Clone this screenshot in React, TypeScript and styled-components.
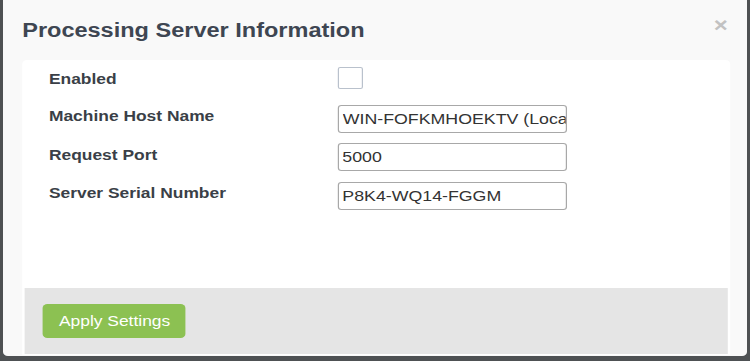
import { FC } from 'react'
import styled, { createGlobalStyle } from 'styled-components'

// the reference is a screenshot that was stretched sideways, so the dialog is laid
// out at its natural width and widened once at the root
const STRETCH = 1.2

const GlobalStyle = createGlobalStyle`
  html, body {
    margin: 0;
    padding: 0;
    height: 100%;
    overflow: hidden;
    background: #4e5153;
  }
  * {
    box-sizing: border-box;
  }
`

const fields = [
  { label: 'Machine Host Name', value: 'WIN-FOFKMHOEKTV (Local)' },
  { label: 'Request Port', value: '5000' },
  { label: 'Server Serial Number', value: 'P8K4-WQ14-FGGM' }
]

const App: FC = () => {
  return (
    <>
      <GlobalStyle />
      <Backdrop>
        <Stage>
          <Modal>
            <Header>
              <Title>Processing Server Information</Title>
              <CloseButton aria-label="Close">×</CloseButton>
            </Header>
            <Panel>
              <Form>
                <Row $height={27}>
                  <Label>Enabled</Label>
                  <Checkbox type="checkbox" />
                </Row>
                {fields.map((f) => (
                  <Row key={f.label} $height={28}>
                    <Label>{f.label}</Label>
                    <TextInput type="text" defaultValue={f.value} />
                  </Row>
                ))}
              </Form>
              <Footer>
                <ApplyButton>Apply Settings</ApplyButton>
              </Footer>
            </Panel>
          </Modal>
        </Stage>
      </Backdrop>
    </>
  )
}

const Backdrop = styled.div`
  height: 100vh;
  padding-left: 3px;
`

const Stage = styled.div`
  width: 620px;
  transform: scaleX(${STRETCH});
  transform-origin: 0 0;
`

const Modal = styled.div`
  display: flex;
  flex-direction: column;
  height: 356px;
  background: #f9f9f9;
  border-radius: 0 0 4px 4px;
  font-family: 'Liberation Sans', Arial, sans-serif;
`

const Header = styled.div`
  display: flex;
  align-items: center;
  justify-content: space-between;
  height: 60px;
  padding: 0 16px 0 16px;
`

const Title = styled.h4`
  margin: 0;
  font-size: 19.6px;
  font-weight: 700;
  line-height: 24px;
  color: #3e4652;
`

const CloseButton = styled.button`
  align-self: flex-start;
  margin-top: 15px;
  padding: 0;
  border: 0;
  background: none;
  font-family: 'Liberation Sans', Arial, sans-serif;
  font-size: 20px;
  font-weight: 700;
  line-height: 20px;
  color: #c2c2c2;
  cursor: pointer;
`

const Panel = styled.div`
  flex: 1;
  display: flex;
  flex-direction: column;
  margin: 0 14px 1px 16px;
  padding: 0 1.7px 1px;
  background: #ffffff;
  border-radius: 4px 4px 0 0;
`

const Form = styled.div`
  flex: 1;
  display: flex;
  flex-direction: column;
  gap: 10.5px;
  padding: 7px 0 0 20.6px;
`

const Row = styled.div<{ $height: number }>`
  display: grid;
  grid-template-columns: 241px 191px;
  align-items: start;
  height: ${(p) => p.$height}px;
`

const Label = styled.label`
  padding-top: 1.5px;
  font-size: 14.5px;
  font-weight: 700;
  line-height: 21px;
  color: #3a3f47;
`

const Checkbox = styled.input`
  appearance: none;
  margin: 0;
  width: 21px;
  height: 22px;
  border: 1px solid #b9c1cc;
  border-radius: 2px;
  background: #ffffff;
`

const TextInput = styled.input`
  width: 191px;
  height: 28px;
  margin: 0;
  padding: 0 0 0 2.5px;
  border: 1px solid #a8a8a8;
  border-radius: 3px;
  background: #ffffff;
  font-family: 'Liberation Sans', Arial, sans-serif;
  font-size: 14.8px;
  color: #333333;
  outline: none;
`

const Footer = styled.div`
  height: 66px;
  padding: 16px 0 0 15.8px;
  background: #e5e5e5;
`

const ApplyButton = styled.button`
  width: 119px;
  height: 34px;
  border: 0;
  border-radius: 4px;
  background: #8cc152;
  color: #ffffff;
  font-family: 'Liberation Sans', Arial, sans-serif;
  font-size: 14.5px;
  cursor: pointer;
`

export default App
